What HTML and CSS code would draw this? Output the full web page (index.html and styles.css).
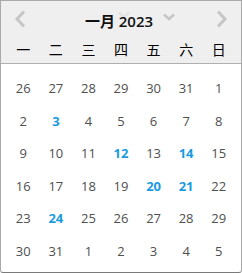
FILE: index.html
```html
<!DOCTYPE html>
<html>
<head>
<meta charset="utf-8">
<link rel="stylesheet" href="styles.css">
</head>
<body>
<div class="cal">
  <div class="head">
    <div class="nav">
      <svg class="arrow" width="12" height="18" viewBox="0 0 12 18"><path d="M10 1.5 L3 9 L10 16.5" fill="none" stroke="#c6c6c6" stroke-width="3"/></svg>
      <div class="title">
        <svg class="chev chev1" width="12" height="8" viewBox="0 0 12 8"><path d="M1 1.5 L6 6 L11 1.5" fill="none" stroke="#e2e2e2" stroke-width="2.5"/></svg>
        <span class="label">一月 2023</span>
        <svg class="chev chev2" width="12" height="8" viewBox="0 0 12 8"><path d="M1 1.5 L6 6 L11 1.5" fill="none" stroke="#c6c6c6" stroke-width="2.5"/></svg>
      </div>
      <svg class="arrow" width="12" height="18" viewBox="0 0 12 18"><path d="M2 1.5 L9 9 L2 16.5" fill="none" stroke="#c6c6c6" stroke-width="3"/></svg>
    </div>
    <div class="weekdays">
      <span>一</span><span>二</span><span>三</span><span>四</span><span>五</span><span>六</span><span>日</span>
    </div>
  </div>
  <div class="days">
    <span>26</span><span>27</span><span>28</span><span>29</span><span>30</span><span>31</span><span>1</span>
    <span>2</span><span class="hl">3</span><span>4</span><span>5</span><span>6</span><span>7</span><span>8</span>
    <span>9</span><span>10</span><span>11</span><span class="hl">12</span><span>13</span><span class="hl">14</span><span>15</span>
    <span>16</span><span>17</span><span>18</span><span>19</span><span class="hl">20</span><span class="hl">21</span><span>22</span>
    <span>23</span><span class="hl">24</span><span>25</span><span>26</span><span>27</span><span>28</span><span>29</span>
    <span>30</span><span>31</span><span>1</span><span>2</span><span>3</span><span>4</span><span>5</span>
  </div>
</div>
</body>
</html>
```
FILE: styles.css
```css
* { box-sizing: border-box; }
html, body { margin: 0; padding: 0; background: #fff; }
.cal {
  width: 242px;
  height: 273px;
  border: 1px solid #a9a9a9;
  border-bottom-color: #7a7a7a;
  border-radius: 0 0 3px 3px;
  display: flex;
  flex-direction: column;
  font-family: "Open Sans", "Noto Sans CJK SC", sans-serif;
}
.head {
  background: #efefef;
  height: 63px;
  border-bottom: 1px solid #b0b0b0;
}
.nav {
  height: 36px;
  display: flex;
  align-items: center;
  justify-content: space-between;
  padding: 0 13px 0 13px;
}
.arrow { display: block; margin-top: -1px; }
.title {
  position: relative;
  display: flex;
  align-items: center;
  margin-left: 18px;
}
.label {
  position: relative;
  font-family: "Open Sans", "Noto Sans CJK SC", sans-serif;
  font-weight: 600;
  font-size: 15px;
  color: #111;
  line-height: 20px;
  margin-top: 3px;
}
.chev { display: block; }
.chev1 { position: absolute; left: 33px; top: 3px; }
.chev2 { margin-left: 10px; margin-top: -4px; }
.weekdays {
  display: grid;
  grid-template-columns: repeat(7, 1fr);
  padding: 0 6px;
  height: 26px;
  align-items: center;
}
.weekdays span {
  text-align: center;
  font-family: "Noto Sans CJK SC", sans-serif;
  font-size: 14px;
  color: #000;
  line-height: 20px;
  margin-top: -2px;
}
.days {
  display: grid;
  grid-template-columns: repeat(7, 1fr);
  grid-auto-rows: 32.5px;
  padding: 8px 6px 0;
  align-items: center;
}
.days span {
  text-align: center;
  font-size: 13px;
  color: #4f4f4f;
  line-height: 18px;
}
.days .hl {
  color: #1a9be0;
  font-weight: 700;
}
```
